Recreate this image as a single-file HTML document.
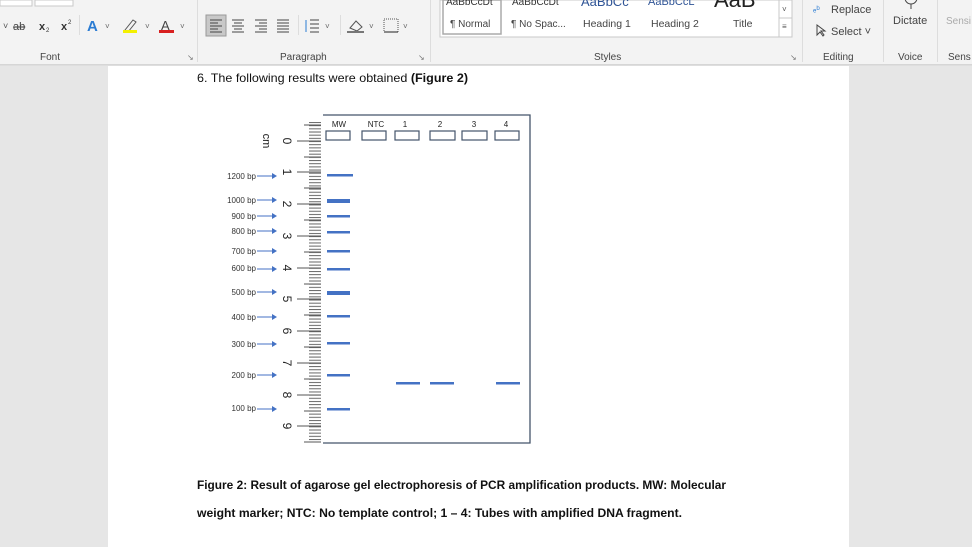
<!DOCTYPE html>
<html><head><meta charset="utf-8"><style>
html,body{margin:0;padding:0;width:972px;height:547px;overflow:hidden;background:#e6e6e6;font-family:"Liberation Sans",sans-serif}
</style></head><body>
<svg width="972" height="547" viewBox="0 0 972 547" xmlns="http://www.w3.org/2000/svg" font-family="Liberation Sans, sans-serif">
<defs>
<pattern id="tk" x="0" y="122" width="20" height="3.17" patternUnits="userSpaceOnUse">
<rect x="0" y="0" width="20" height="1" fill="#666"/>
</pattern>
</defs>
<!-- ribbon -->
<rect x="0" y="0" width="972" height="64" fill="#f3f3f3"/>
<rect x="0" y="64" width="972" height="1.5" fill="#d6d6d6"/>
<!-- font group -->
<rect x="0" y="0" width="32" height="6" fill="#fff" stroke="#c8c8c8"/>
<rect x="35" y="0" width="38" height="6" fill="#fff" stroke="#c8c8c8"/>
<text x="3" y="29" font-size="9" fill="#555">˅</text>
<text x="13" y="30" font-size="11" fill="#444" text-decoration="line-through">ab</text>
<text x="39" y="30" font-size="11" fill="#333" font-weight="bold">x</text><text x="46" y="32" font-size="6" fill="#333">2</text>
<text x="61" y="30" font-size="11" fill="#333" font-weight="bold">x</text><text x="68" y="24" font-size="6" fill="#333">2</text>
<rect x="79" y="15" width="1" height="20" fill="#ddd"/>
<text x="87" y="31" font-size="15" fill="#2b7cd3" font-weight="bold">A</text><text x="105" y="29" font-size="8" fill="#666">˅</text>
<path d="M125 30 l8 -10 l3 2 l-8 10z" fill="none" stroke="#555"/><rect x="123" y="30" width="14" height="3" fill="#f3f000"/><text x="145" y="29" font-size="8" fill="#666">˅</text>
<text x="161" y="30" font-size="13" fill="#444">A</text><rect x="159" y="30" width="15" height="3" fill="#d82020"/><text x="180" y="29" font-size="8" fill="#666">˅</text>
<text x="40" y="60" font-size="10" fill="#444">Font</text>
<text x="187" y="60" font-size="8" fill="#777">↘</text>
<rect x="197" y="0" width="1" height="62" fill="#ddd"/>
<!-- paragraph -->
<rect x="206" y="15" width="20" height="21" fill="#c8c8c8" stroke="#999"/>
<g stroke="#444" stroke-width="1">
<path d="M210 20h12M210 23h8M210 26h12M210 29h8M210 32h12"/>
<path d="M232 20h12M234 23h8M232 26h12M234 29h8M232 32h12"/>
<path d="M255 20h12M259 23h8M255 26h12M259 29h8M255 32h12"/>
<path d="M277 20h12M277 23h12M277 26h12M277 29h12M277 32h12"/>
<path d="M310 20h9M310 24h9M310 28h9M310 32h9"/>
</g>
<path d="M306 20v12" stroke="#2b7cd3"/>
<rect x="298" y="15" width="1" height="20" fill="#ddd"/>
<text x="325" y="29" font-size="8" fill="#666">˅</text>
<rect x="340" y="15" width="1" height="20" fill="#ddd"/>
<path d="M350 28 l6 -7 l6 6 l-5 4z" fill="none" stroke="#555"/><rect x="347" y="31" width="17" height="2" fill="#777"/><text x="369" y="29" font-size="8" fill="#666">˅</text>
<rect x="384" y="19" width="14" height="13" fill="none" stroke="#555" stroke-dasharray="1,1"/><path d="M384 32h14" stroke="#222"/><text x="403" y="29" font-size="8" fill="#666">˅</text>
<text x="280" y="60" font-size="10" fill="#444">Paragraph</text>
<text x="418" y="60" font-size="8" fill="#777">↘</text>
<rect x="430" y="0" width="1" height="62" fill="#ddd"/>
<!-- styles -->
<rect x="440" y="0" width="352" height="37" fill="#fff" stroke="#c8c8c8"/>
<rect x="443" y="0" width="58" height="34" fill="#fff" stroke="#aaa" stroke-width="1.5"/>
<text x="446" y="5" font-size="10" fill="#333">AaBbCcDt</text>
<text x="512" y="5" font-size="10" fill="#333">AaBbCcDt</text>
<text x="581" y="6" font-size="13" fill="#2f5496">AaBbCc</text>
<text x="648" y="5" font-size="11" fill="#2f5496">AaBbCcL</text>
<text x="714" y="7" font-size="22" fill="#222">AaB</text>
<text x="450" y="27" font-size="10" fill="#444">¶ Normal</text>
<text x="511" y="27" font-size="10" fill="#444">¶ No Spac...</text>
<text x="583" y="27" font-size="10.5" fill="#444">Heading 1</text>
<text x="651" y="27" font-size="10.5" fill="#444">Heading 2</text>
<text x="733" y="27" font-size="10.5" fill="#444">Title</text>
<rect x="779" y="0" width="13" height="18" fill="#fff" stroke="#c8c8c8"/>
<rect x="779" y="18" width="13" height="19" fill="#fff" stroke="#c8c8c8"/>
<text x="782" y="12" font-size="8" fill="#555">˅</text>
<text x="782" y="29" font-size="8" fill="#555">≡</text>
<text x="594" y="60" font-size="10" fill="#444">Styles</text>
<text x="790" y="60" font-size="8" fill="#777">↘</text>
<rect x="802" y="0" width="1" height="62" fill="#ddd"/>
<text x="813" y="12" font-size="9" fill="#2b7cd3">ₑᵇ</text>
<text x="831" y="13" font-size="11" fill="#444">Replace</text>
<path d="M817 25 l0 10 l3 -3 l3 4 l1 -1 l-3 -4 l4 0z" fill="none" stroke="#444"/>
<text x="831" y="35" font-size="11" fill="#444">Select ˅</text>
<text x="823" y="60" font-size="10" fill="#444">Editing</text>
<rect x="883" y="0" width="1" height="62" fill="#ddd"/>
<circle cx="911" cy="-2" r="6" fill="none" stroke="#444"/><path d="M911 4v5" stroke="#444"/>
<text x="893" y="24" font-size="11" fill="#444">Dictate</text>
<text x="898" y="60" font-size="10" fill="#444">Voice</text>
<rect x="937" y="0" width="1" height="62" fill="#ddd"/>
<text x="946" y="24" font-size="10" fill="#aaa">Sensi</text>
<text x="948" y="60" font-size="10" fill="#444">Sens</text>
<!-- page -->
<rect x="108" y="66" width="741" height="481" fill="#fff"/>
<text x="197" y="82" font-size="12" fill="#111" textLength="271" lengthAdjust="spacingAndGlyphs">6. The following results were obtained <tspan font-weight="bold">(Figure 2)</tspan></text>
<!-- gel -->
<path d="M323 115 H530 V443 H323" fill="none" stroke="#44546a" stroke-width="1.3"/>
<rect x="309" y="122" width="12" height="320" fill="url(#tk)"/>
<g stroke="#555" stroke-width="1">
<path d="M297 141h24M297 172h24M297 204h24M297 236h24M297 268h24M297 299h24M297 331h24M297 363h24M297 395h24M297 426h24"/>
<path d="M304 125h17M304 157h17M304 188h17M304 220h17M304 252h17M304 284h17M304 315h17M304 347h17M304 379h17M304 411h17M304 442h17"/>
</g>
<g font-size="12" fill="#222" text-anchor="middle">
<text transform="translate(287,141) rotate(90)" dy="4">0</text>
<text transform="translate(287,172) rotate(90)" dy="4">1</text>
<text transform="translate(287,204) rotate(90)" dy="4">2</text>
<text transform="translate(287,236) rotate(90)" dy="4">3</text>
<text transform="translate(287,268) rotate(90)" dy="4">4</text>
<text transform="translate(287,299) rotate(90)" dy="4">5</text>
<text transform="translate(287,331) rotate(90)" dy="4">6</text>
<text transform="translate(287,363) rotate(90)" dy="4">7</text>
<text transform="translate(287,395) rotate(90)" dy="4">8</text>
<text transform="translate(287,426) rotate(90)" dy="4">9</text>
<text transform="translate(267,141) rotate(90)" dy="4" font-size="11">cm</text>
</g>
<g font-size="8" fill="#222" text-anchor="middle">
<text x="339" y="127">MW</text><text x="376" y="127">NTC</text><text x="405" y="127">1</text><text x="440" y="127">2</text><text x="474" y="127">3</text><text x="506" y="127">4</text>
</g>
<g fill="none" stroke="#44546a" stroke-width="1.2">
<rect x="326" y="131" width="24" height="9"/><rect x="362" y="131" width="24" height="9"/><rect x="395" y="131" width="24" height="9"/><rect x="430" y="131" width="25" height="9"/><rect x="462" y="131" width="25" height="9"/><rect x="495" y="131" width="24" height="9"/>
</g>
<g fill="#4472c4">
<rect x="327" y="174" width="26" height="2.5"/>
<rect x="327" y="199" width="23" height="4"/>
<rect x="327" y="215" width="23" height="2.5"/>
<rect x="327" y="231" width="23" height="2.5"/>
<rect x="327" y="250" width="23" height="2.5"/>
<rect x="327" y="268" width="23" height="2.5"/>
<rect x="327" y="291" width="23" height="4"/>
<rect x="327" y="315" width="23" height="2.5"/>
<rect x="327" y="342" width="23" height="2.5"/>
<rect x="327" y="374" width="23" height="2.5"/>
<rect x="327" y="408" width="23" height="2.5"/>
<rect x="396" y="382" width="24" height="2.5"/>
<rect x="430" y="382" width="24" height="2.5"/>
<rect x="496" y="382" width="24" height="2.5"/>
</g>
<g font-size="8" fill="#333" text-anchor="end">
<text x="256" y="179">1200 bp</text><text x="256" y="203">1000 bp</text><text x="256" y="219">900 bp</text><text x="256" y="234">800 bp</text><text x="256" y="254">700 bp</text><text x="256" y="271">600 bp</text><text x="256" y="295">500 bp</text><text x="256" y="320">400 bp</text><text x="256" y="347">300 bp</text><text x="256" y="378">200 bp</text><text x="256" y="411">100 bp</text>
</g>
<g stroke="#4472c4" stroke-width="1" fill="#4472c4">
<path d="M257 176h16M257 200h16M257 216h16M257 231h16M257 251h16M257 269h16M257 292h16M257 317h16M257 344h16M257 375h16M257 409h16"/>
<path d="M272 173l5 3l-5 3zM272 197l5 3l-5 3zM272 213l5 3l-5 3zM272 228l5 3l-5 3zM272 248l5 3l-5 3zM272 266l5 3l-5 3zM272 289l5 3l-5 3zM272 314l5 3l-5 3zM272 341l5 3l-5 3zM272 372l5 3l-5 3zM272 406l5 3l-5 3z" stroke="none"/>
</g>
<text x="197" y="489" font-size="12" font-weight="bold" fill="#111" textLength="529" lengthAdjust="spacingAndGlyphs">Figure 2: Result of agarose gel electrophoresis of PCR amplification products. MW: Molecular</text>
<text x="197" y="517" font-size="12" font-weight="bold" fill="#111" textLength="485" lengthAdjust="spacingAndGlyphs">weight marker; NTC: No template control; 1 – 4: Tubes with amplified DNA fragment.</text>
</svg>
</body></html>
